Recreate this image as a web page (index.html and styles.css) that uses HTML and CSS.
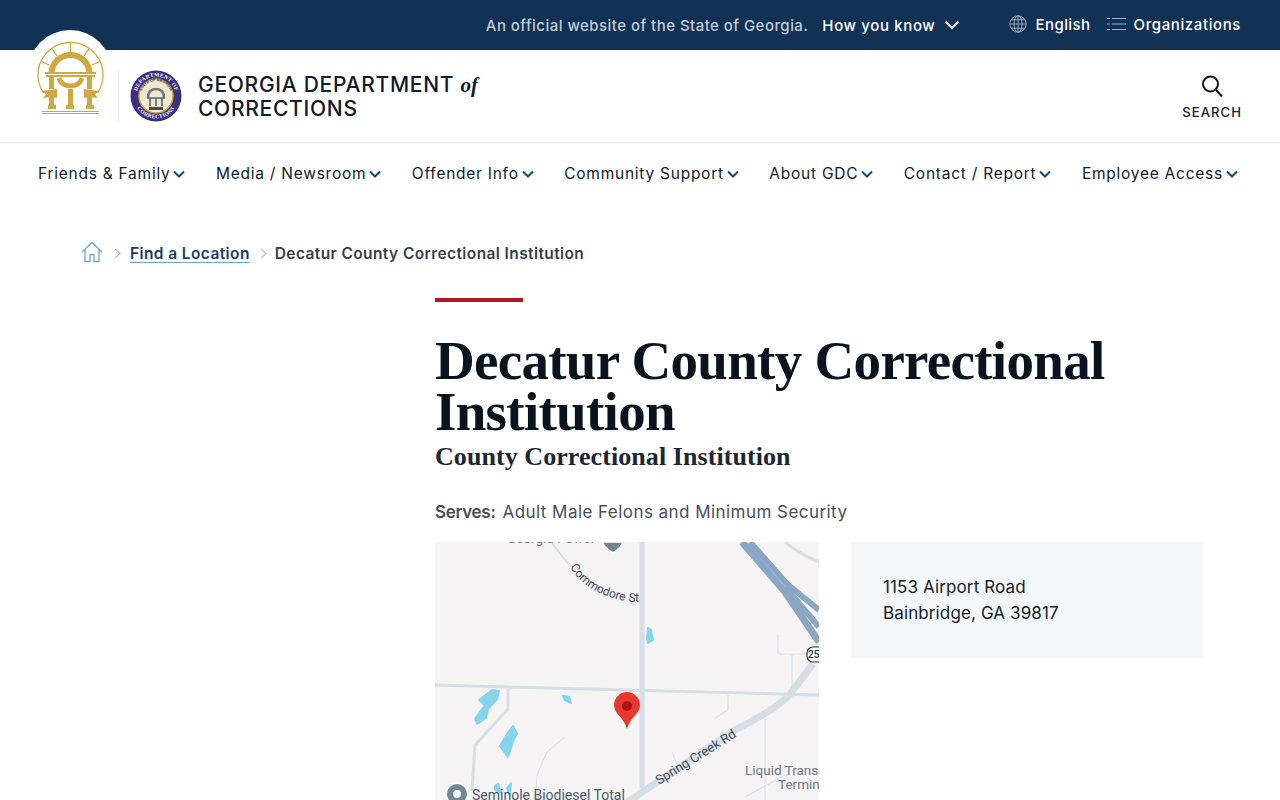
FILE: index.html
```html
<!DOCTYPE html>
<html lang="en">
<head>
<meta charset="utf-8">
<title>Decatur County Correctional Institution</title>
<link rel="stylesheet" href="styles.css">
</head>
<body>
<div class="topbar">
  <span class="official">An official website of the State of Georgia.</span>
  <span class="know">How you know
    <svg class="know-chev" width="16" height="10" viewBox="0 0 16 10"><path d="M1.500 1.500 8 8l6.500-6.500" fill="none" stroke="#fff" stroke-width="2"/></svg>
  </span>
  <span class="tool tool-lang">
    <svg width="18" height="18" viewBox="0 0 18 18" fill="none" stroke="#9fb0c2" stroke-width=".9"><circle cx="9" cy="9" r="8.200"/><ellipse cx="9" cy="9" rx="4" ry="8.200"/><path d="M9 .8v16.400M.8 9h16.400M2 4.800h14M2 13.200h14"/></svg>
    English
  </span>
  <span class="tool">
    <svg width="19" height="14" viewBox="0 0 19 14" fill="none" stroke="#9fb0c2" stroke-width="1"><path d="M5 1.500h14M5 7h14M5 12.500h14M0 1.500h3M0 7h3M0 12.500h3"/></svg>
    Organizations
  </span>
</div>

<header class="masthead">
  <div class="seal-disc">
    <svg width="70" height="76" viewBox="35 40 70 76">
      <g fill="none" stroke="#cfa840">
        <path d="M43.500 93A32.500 32.500 0 1 1 97.500 93" stroke-width="1.300"/>
        <path d="M70.500 42.500V56M52.100 48.800l5.200 7.300M88.900 48.800l-5.200 7.300M41.400 61.500l8.200 3.800M99.600 61.500l-8.200 3.800" stroke-width="1.200"/>
        <path d="M51.600 72A19 19 0 0 1 89.400 72" stroke-width="6"/>
        <path d="M59 78c2 6 7 8 11.500 8s9.500-2 11.500-8" stroke-width="5"/>
      </g>
      <g fill="#cfa840">
        <rect x="45" y="72" width="51" height="2"/><rect x="46" y="75" width="49" height="2"/>
        <rect x="49" y="77" width="5" height="12"/><rect x="87" y="77" width="5" height="12"/>
        <rect x="49" y="97" width="5" height="8"/><rect x="87" y="97" width="5" height="8"/>
        <rect x="68" y="89" width="5" height="16"/>
        <path d="M42 91l15-2v9l-6-1-8 1 3-3.500zM99 91l-15-2v9l6-1 8 1-3-3.500z"/>
        <rect x="48" y="105" width="8" height="4"/><rect x="66" y="105" width="8" height="4"/><rect x="86" y="105" width="8" height="4"/>
        <rect x="42" y="111" width="57" height="1"/><rect x="42" y="113" width="57" height="1"/>
      </g>
    </svg>
  </div>
  <div class="divider"></div>
  <svg class="gdc-seal" width="52" height="52" viewBox="0 0 52 52">
    <defs>
      <path id="sealTop" d="M6.500 26a19.500 19.500 0 0 1 39 0"/>
      <path id="sealBottom" d="M3.500 26a22.500 22.500 0 0 0 45 0"/>
      <path id="sealInner" d="M11 26a15 15 0 0 1 30 0"/>
    </defs>
    <circle cx="26" cy="26" r="25.500" fill="#3c2f80"/>
    <circle cx="26" cy="26" r="17" fill="#f2e8cf" stroke="#c9a440" stroke-width="1.500"/>
    <text class="seal-text"><textPath href="#sealTop" startOffset="50%">DEPARTMENT OF</textPath></text>
    <text class="seal-text"><textPath href="#sealBottom" startOffset="50%">CORRECTIONS</textPath></text>
    <text class="seal-inner"><textPath href="#sealInner" startOffset="50%">STATE OF GEORGIA</textPath></text>
    <path d="M18 28c0-6 3-9 8-9s8 3 8 9" fill="none" stroke="#6c7a80" stroke-width="2.500"/>
    <path d="M17 28h18M20 28v8M26 28v8M32 28v8" stroke="#59666c" stroke-width="1.600"/>
    <rect x="19" y="37" width="14" height="3" fill="#4c4a4a"/>
  </svg>
  <div class="agency">GEORGIA DEPARTMENT <em class="of">of</em><br>CORRECTIONS</div>
  <div class="search">
    <svg width="24" height="24" viewBox="0 0 24 24" fill="none" stroke="#0d1b2a" stroke-width="2"><circle cx="10.500" cy="10" r="7.500"/><path d="M16 16l6 6.500"/></svg>
    <span>SEARCH</span>
  </div>
</header>

<nav class="mainnav">
  <a>Friends &amp; Family<svg class="chev" width="12" height="8" viewBox="0 0 12 8"><path d="M1 1.500 6 6.500l5-5" fill="none" stroke="#0e4a75" stroke-width="2"/></svg></a>
  <a>Media / Newsroom<svg class="chev" width="12" height="8" viewBox="0 0 12 8"><path d="M1 1.500 6 6.500l5-5" fill="none" stroke="#0e4a75" stroke-width="2"/></svg></a>
  <a>Offender Info<svg class="chev" width="12" height="8" viewBox="0 0 12 8"><path d="M1 1.500 6 6.500l5-5" fill="none" stroke="#0e4a75" stroke-width="2"/></svg></a>
  <a>Community Support<svg class="chev" width="12" height="8" viewBox="0 0 12 8"><path d="M1 1.500 6 6.500l5-5" fill="none" stroke="#0e4a75" stroke-width="2"/></svg></a>
  <a>About GDC<svg class="chev" width="12" height="8" viewBox="0 0 12 8"><path d="M1 1.500 6 6.500l5-5" fill="none" stroke="#0e4a75" stroke-width="2"/></svg></a>
  <a>Contact / Report<svg class="chev" width="12" height="8" viewBox="0 0 12 8"><path d="M1 1.500 6 6.500l5-5" fill="none" stroke="#0e4a75" stroke-width="2"/></svg></a>
  <a>Employee Access<svg class="chev" width="12" height="8" viewBox="0 0 12 8"><path d="M1 1.500 6 6.500l5-5" fill="none" stroke="#0e4a75" stroke-width="2"/></svg></a>
</nav>

<div class="crumbs">
  <svg class="home" width="22" height="22" viewBox="0 0 22 22" fill="none" stroke="#6aa5d6" stroke-width="1.300"><path d="M1 11 11 1.500 21 11M4 8.500V20.500h5v-7h4v7h5V8.500"/></svg>
  <svg class="sep sep-first" width="7" height="11" viewBox="0 0 7 11"><path d="M1 1l5 4.500L1 10" fill="none" stroke="#a9bccd" stroke-width="1.100"/></svg>
  <a class="crumb-link">Find a Location</a>
  <svg class="sep" width="7" height="11" viewBox="0 0 7 11"><path d="M1 1l5 4.500L1 10" fill="none" stroke="#a9bccd" stroke-width="1.100"/></svg>
  <span class="crumb-now">Decatur County Correctional Institution</span>
</div>

<main class="content">
  <div class="redbar"></div>
  <h1>Decatur County Correctional Institution</h1>
  <h2>County Correctional Institution</h2>
  <p class="serves"><strong>Serves:</strong><span>Adult Male Felons and Minimum Security</span></p>
  <div class="details">
    <svg class="map" width="384" height="258" viewBox="0 0 384 258">
      <defs><path id="commodore" d="M135 25Q152 54 198 60L240 60"/></defs>
      <rect width="384" height="258" fill="#f5f3f4"/>
      <g fill="none" stroke="#d5dee6">
        <path d="M207 0v246" stroke-width="5"/>
        <path d="M0 143l384 10" stroke-width="3"/>
        <path d="M117 1l18 23M199 59h7" stroke-width="2"/>
        <path d="M188 263 300 188Q345 165 355 152L378 122" stroke-width="7"/>
        <path d="M73 147v20l-33 36-3 46" stroke-width="3"/>
        <path d="M350 0q14 12 34 20" stroke-width="3"/>
        <path d="M343 93v19h41M357 113v40M293 153v15l-13 8M330 177v81M130 195l-18 15-10 23-1 15M237 210l5 12M310 255l44-24" stroke-width="1"/>
      </g>
      <g fill="none" stroke="#8ba6c4">
        <path d="M307 0 350 50 384 100" stroke-width="7"/>
        <path d="M315 0 352 42 384 68" stroke-width="6"/>
        <path d="M350 45 384 85" stroke-width="6"/>
      </g>
      <g fill="#84d4ec" stroke="#84d4ec" stroke-width="2" stroke-linejoin="round">
        <path d="M64 149 57 148 44 158 50 163 40 177 42 182 51 176 53 167 62 157z"/>
        <path d="M78 184 82 192 79 197 73 215 65 204 72 192z"/>
        <path d="M128 154 134 155 136 161 130 158z"/>
        <path d="M213 86 216 88 218 98 213 101 212 96z"/>
        <path d="M60 244 63 242 66 250 60 248zM72 246 76 241 75 254z"/>
      </g>
      <path d="M167 0Q170 6 178 11 186 6 188 0z" fill="#75858f" stroke="#fff" stroke-width="1.500"/>
      <g class="map-label">
        <text x="72" y="1" class="poi">Georgia Power</text>
        <text class="street"><textPath href="#commodore">Commodore St</textPath></text>
        <text transform="translate(224 243) rotate(-32)" class="street sp">Spring Creek Rd</text>
        <text x="310" y="233" class="poi">Liquid Trans</text>
        <text x="343" y="247" class="poi">Termin</text>
        <text x="37" y="258" class="poi-dark">Seminole Biodiesel Total</text>
      </g>
      <circle cx="22" cy="252" r="11" fill="#6f8797" stroke="#fff" stroke-width="2"/>
      <circle cx="22" cy="252" r="4" fill="#fff"/>
      <rect x="372" y="105" width="24" height="15" rx="6" fill="#fff" stroke="#2b3640" stroke-width="1.200"/>
      <text x="373" y="116" class="shield">25</text>
      <path d="M179 163c0-7 6-13 13-13s13 6 13 13c0 9-10 12-13 24-3-12-13-15-13-24z" fill="#e9392e"/>
      <circle cx="192" cy="164" r="5" fill="#a81313"/>
    </svg>
    <aside class="address">1153 Airport Road<br>Bainbridge, GA 39817</aside>
  </div>
</main>
</body>
</html>
```
FILE: styles.css
```css
* { box-sizing: border-box; }
html, body { margin: 0; height: 800px; overflow: hidden; }
body { font-family: Inter, "Noto Sans", sans-serif; background: #fff; color: #0d1b2a; position: relative; }
.topbar { height: 50px; background: #113255; color: #fff; display: flex; align-items: center; justify-content: flex-end; padding-right: 39px; font-size: 15px; font-weight: 500; }
.official { color: #c3ccd6; letter-spacing: .46px; margin-right: 14px; }
.know { display: flex; align-items: center; gap: 9px; margin-right: 49px; letter-spacing: .63px; }
.tool { display: flex; align-items: center; gap: 8px; letter-spacing: .6px; margin-top: -2px; }
.tool-lang { margin-right: 16px; letter-spacing: .45px; }
.masthead { height: 93px; display: flex; align-items: center; border-bottom: 1px solid #e1e4e8; padding: 0 38px 0 118px; }
.seal-disc { position: absolute; left: 28px; top: 30px; width: 84px; height: 84px; border-radius: 50%; background: #fff; display: flex; justify-content: center; padding-top: 10px; }
.divider { width: 1px; height: 50px; background: #e4e4e0; margin-right: 11px; }
.gdc-seal { margin-right: 16px; }
.seal-text { font-family: "Liberation Serif", serif; font-size: 5.500px; font-weight: 700; fill: #fff; text-anchor: middle; letter-spacing: .3px; }
.seal-inner { font-family: "Liberation Sans", sans-serif; font-size: 3.800px; font-weight: 700; fill: #3c2f80; text-anchor: middle; }
.agency { font-size: 21px; font-weight: 500; line-height: 24px; letter-spacing: .72px; color: #0d1b2a; margin-top: 2px; }
.of { font-family: "Liberation Serif", serif; font-size: 21px; font-weight: 700; letter-spacing: 0; }
.search { margin-left: auto; display: flex; flex-direction: column; align-items: center; gap: 6px; font-size: 13px; font-weight: 500; letter-spacing: 1.100px; padding-top: 2px; }
.mainnav { display: flex; justify-content: space-between; padding: 20px 42px 0 38px; font-size: 15.500px; letter-spacing: .75px; height: 60px; }
.mainnav a { display: flex; align-items: center; height: 20px; gap: 3px; white-space: nowrap; }
.chev { margin-top: 2px; }
.crumbs { display: flex; align-items: center; margin: 38px 0 0 81px; height: 24px; font-size: 15.500px; font-weight: 600; letter-spacing: .4px; color: #333f4b; }
.home { margin: -3px 1px 0 0; }
.sep { margin: 0 8px 0 10px; }
.sep-first { margin-right: 9px; }
.crumb-link { color: #1c3d63; text-decoration: underline; text-decoration-color: #6aa5d6; text-underline-offset: 3px; }
.content { padding-left: 435px; width: 1203px; margin-top: 33px; }
.redbar { width: 88px; height: 4px; background: #ac1a1f; }
h1 { margin: 33px 0 0; font-family: "Liberation Serif", serif; font-weight: 700; font-size: 55px; letter-spacing: -.7px; line-height: 51px; color: #07131e; }
h2 { margin: 5px 0 0; font-family: "Liberation Serif", serif; font-weight: 700; font-size: 26px; letter-spacing: .07px; line-height: 30px; color: #1c2733; }
.serves { margin: 28px 0 0; display: flex; gap: 7px; font-size: 17px; line-height: 24px; letter-spacing: .45px; color: #454f59; }
.serves strong { font-weight: 600; letter-spacing: -.3px; }
.details { margin-top: 18px; display: flex; align-items: flex-start; gap: 32px; }
.map { display: block; flex: none; }
.address { flex: 1; background: #f4f7fa; padding: 32px; font-size: 17px; line-height: 26px; height: 116px; letter-spacing: .12px; color: #111d29; }
.map-label text { font-family: Roboto, sans-serif; font-size: 12px; fill: #4b5a6b; }
.map-label .street { fill: #3d4b5c; }
.map-label .sp { font-size: 13px; }
.map-label .poi { fill: #6d7a8a; font-size: 13.500px; }
.map-label .poi-dark { fill: #4b5a6b; font-size: 14px; }
.shield { font-family: Roboto, sans-serif; font-size: 10px; font-weight: 500; fill: #26323c; }
```
